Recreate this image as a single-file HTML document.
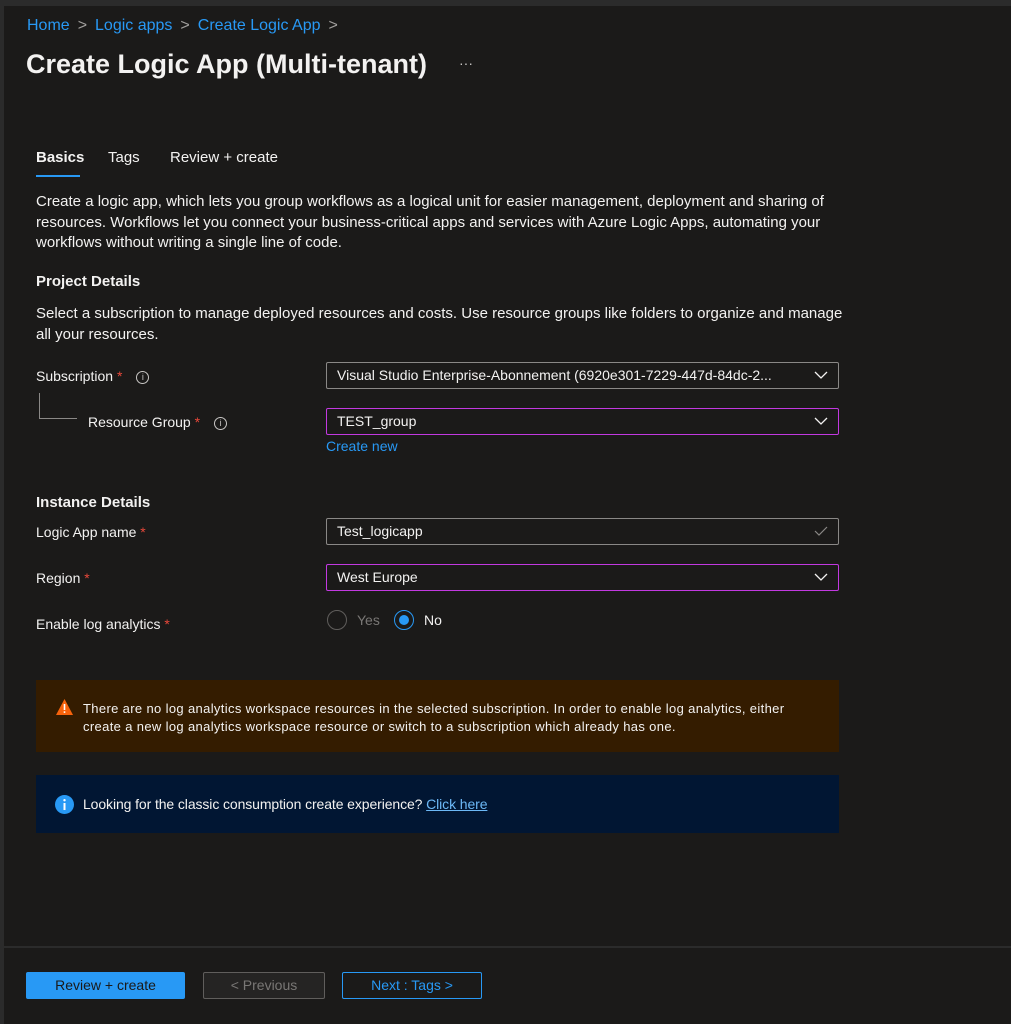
<!DOCTYPE html>
<html><head><meta charset="utf-8"><style>
*{box-sizing:border-box;margin:0;padding:0}
body{width:1011px;height:1024px;background:#1b1a19;font-family:"Liberation Sans",sans-serif;color:#f3f2f1;font-size:14px;position:relative;overflow:hidden}
.abs{position:absolute;white-space:nowrap}
.top{position:absolute;left:0;top:0;width:1011px;height:6px;background:#2b2b2b}
.left{position:absolute;left:0;top:0;width:4px;height:1024px;background:#2b2b2b}
.bc{color:#2899f5;font-size:16px}
.bc span{color:#a19f9d;margin:0 8px}
.lbl{font-size:14px;color:#f3f2f1}
.req{color:#e8483a}
.info{display:inline-block;width:13px;height:13px;border:1px solid #c8c6c4;border-radius:50%;font-size:9px;line-height:11px;text-align:center;color:#c8c6c4;margin-left:14px;vertical-align:1px}
.in{position:absolute;left:326px;width:513px;height:27px;border:1px solid #8a8886;border-radius:2px;padding:0 10px;line-height:25px;font-size:14px;color:#f3f2f1}
.in.f{border-color:#c239e0}
.chev{position:absolute;right:10px;top:8px}
p.d{position:absolute;left:36px;line-height:20.5px;font-size:15px;white-space:nowrap}
.btn{position:absolute;top:972px;height:27px;font-size:14px;text-align:center;line-height:25px;border-radius:2px}
</style></head><body>
<div class="top"></div><div class="left"></div>
<div class="abs bc" style="left:27px;top:17px">Home<span>&gt;</span>Logic apps<span>&gt;</span>Create Logic App<span>&gt;</span></div>
<div class="abs" style="left:26px;top:49px;font-size:27px;font-weight:bold;letter-spacing:0px">Create Logic App (Multi-tenant)</div>
<div class="abs" style="left:459px;top:55px;color:#c8c6c4;font-size:14px">···</div>

<div class="abs" style="left:36px;top:149px;font-size:15px;font-weight:bold">Basics</div>
<div class="abs" style="left:36px;top:175px;width:44px;height:2px;background:#2899f5"></div>
<div class="abs" style="left:108px;top:149px;font-size:15px">Tags</div>
<div class="abs" style="left:170px;top:149px;font-size:15px">Review + create</div>

<p class="d" style="top:192px">Create a logic app, which lets you group workflows as a logical unit for easier management, deployment and sharing of<br>resources. Workflows let you connect your business-critical apps and services with Azure Logic Apps, automating your<br>workflows without writing a single line of code.</p>
<div class="abs" style="left:36px;top:273px;font-size:15px;font-weight:bold">Project Details</div>
<p class="d" style="top:304px">Select a subscription to manage deployed resources and costs. Use resource groups like folders to organize and manage<br>all your resources.</p>

<div class="abs lbl" style="left:36px;top:368px">Subscription <span class="req">*</span><span class="info">i</span></div>
<div class="abs" style="left:39px;top:393px;width:38px;height:26px;border-left:1px solid #8a8886;border-bottom:1px solid #8a8886"></div>
<div class="abs lbl" style="left:88px;top:414px">Resource Group <span class="req">*</span><span class="info">i</span></div>
<div class="in" style="top:362px">Visual Studio Enterprise-Abonnement (6920e301-7229-447d-84dc-2...<svg class="chev" width="14" height="9"><path d="M1 1l6 6 6-6" stroke="#f3f2f1" fill="none" stroke-width="1.3"/></svg></div>
<div class="in f" style="top:408px">TEST_group<svg class="chev" width="14" height="9"><path d="M1 1l6 6 6-6" stroke="#f3f2f1" fill="none" stroke-width="1.3"/></svg></div>
<div class="abs" style="left:326px;top:438px;color:#2899f5">Create new</div>

<div class="abs" style="left:36px;top:494px;font-size:15px;font-weight:bold">Instance Details</div>
<div class="abs lbl" style="left:36px;top:524px">Logic App name <span class="req">*</span></div>
<div class="in" style="top:518px">Test_logicapp<svg class="chev" width="14" height="10" style="top:7px"><path d="M1 5l4 4 8-8" stroke="#8a8886" fill="none" stroke-width="1.2"/></svg></div>
<div class="abs lbl" style="left:36px;top:570px">Region <span class="req">*</span></div>
<div class="in f" style="top:564px">West Europe<svg class="chev" width="14" height="9"><path d="M1 1l6 6 6-6" stroke="#f3f2f1" fill="none" stroke-width="1.3"/></svg></div>
<div class="abs lbl" style="left:36px;top:616px">Enable log analytics <span class="req">*</span></div>
<div class="abs" style="left:327px;top:610px;width:20px;height:20px;border:1px solid #605e5c;border-radius:50%"></div>
<div class="abs" style="left:357px;top:612px;color:#797775">Yes</div>
<div class="abs" style="left:394px;top:610px;width:20px;height:20px;border:1px solid #2899f5;border-radius:50%"><div style="margin:4px;width:10px;height:10px;border-radius:50%;background:#2899f5"></div></div>
<div class="abs" style="left:424px;top:612px">No</div>

<div class="abs" style="left:36px;top:680px;width:803px;height:72px;background:#341c00"></div>
<svg class="abs" style="left:55px;top:698px" width="19" height="18"><path d="M9.5 1L18 17H1z" fill="#f7630c"/><rect x="8.7" y="6" width="1.6" height="6" fill="#fff"/><rect x="8.7" y="13.3" width="1.6" height="1.6" fill="#fff"/></svg>
<div class="abs" style="left:83px;top:700px;font-size:13px;line-height:18px;letter-spacing:0.35px">There are no log analytics workspace resources in the selected subscription. In order to enable log analytics, either<br>create a new log analytics workspace resource or switch to a subscription which already has one.</div>

<div class="abs" style="left:36px;top:775px;width:803px;height:58px;background:#011633"></div>
<svg class="abs" style="left:55px;top:795px" width="19" height="19"><circle cx="9.5" cy="9.5" r="9.5" fill="#2899f5"/><rect x="8.5" y="8" width="2" height="7" fill="#fff"/><circle cx="9.5" cy="5.2" r="1.2" fill="#fff"/></svg>
<div class="abs" style="left:83px;top:796px;font-size:14px;letter-spacing:-0.1px">Looking for the classic consumption create experience? <span style="color:#6cb8f6;text-decoration:underline">Click here</span></div>

<div class="abs" style="left:4px;top:946px;width:1007px;height:2px;background:#2b2b2b"></div>
<div class="btn" style="left:26px;width:159px;background:#2899f5;color:#1b1a19;border:1px solid #2899f5">Review + create</div>
<div class="btn" style="left:203px;width:122px;border:1px solid #605e5c;color:#797775;background:#252423">&lt; Previous</div>
<div class="btn" style="left:342px;width:140px;border:1px solid #2899f5;color:#2899f5">Next : Tags &gt;</div>
</body></html>
